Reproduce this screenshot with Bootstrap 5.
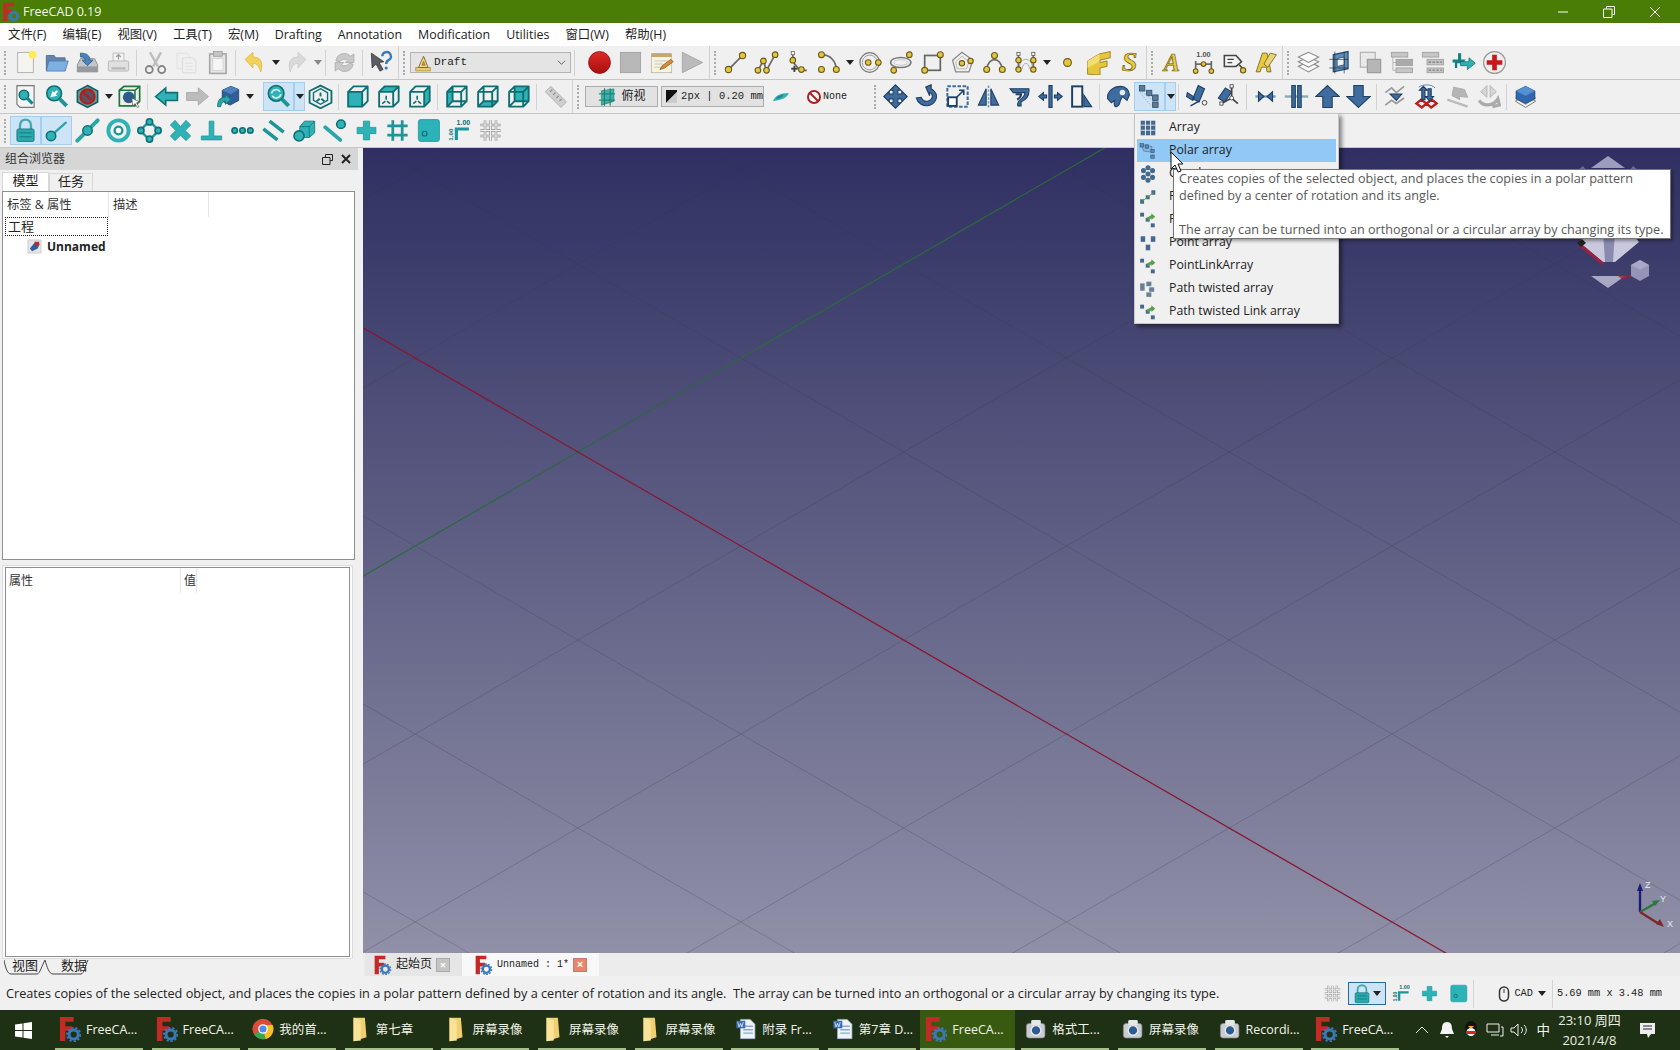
<!DOCTYPE html>
<html lang="zh">
<head>
<meta charset="UTF-8">
<title>FreeCAD 0.19</title>
<link href="https://cdn.jsdelivr.net/npm/bootstrap@5.3.0/dist/css/bootstrap.min.css" rel="stylesheet">
<script src="https://cdn.jsdelivr.net/npm/bootstrap@5.3.0/dist/js/bootstrap.bundle.min.js"></script>
<style>
html,body{width:1680px;height:1050px;overflow:hidden;margin:0}
body{font-family:"Open Sans","Noto Sans CJK SC",sans-serif;font-size:12px;line-height:1.2;color:#222;background:#f0f0f0;position:relative}
.mono{font-family:"Liberation Mono","Noto Sans CJK SC",monospace}
.titlebar{height:23px;background:#4a7d05;color:#f4f7ee;font-size:12.5px}
.titlebar svg.app{width:18px;height:20px;margin:0 3px 0 2px}
.winctl{margin-right:2px}
.winbtn{width:46px;display:flex;justify-content:center}
.menubar{height:23px;background:#fff;padding-left:0}
.menubar .nav-link{padding:0 8px;color:#222;font-size:12.4px;line-height:23px}
.tb-row{height:34px;background:#f0f0f0;border-bottom:1px solid #c6c6c6}
.tb-btn{width:31px;height:29px;display:flex;align-items:center;justify-content:center;flex:none}
.tb-btn svg{width:25px;height:25px}
.tb-arrow{width:11px;height:29px;display:flex;align-items:center;justify-content:center;flex:none}
.tb-arrow::before{content:"";border:4px solid transparent;border-top:5px solid #222;border-bottom:0}
.tb-arrow.dim::before{border-top-color:#888}
.tb-on{background:#cde4f7;box-shadow:inset 0 0 0 1px #a5cdf0}
.tb-grip{width:10px;height:26px;flex:none;position:relative}
.tb-grip::before{content:"";position:absolute;left:4px;top:1px;bottom:1px;border-left:2px dotted #aaa}
.tb-sep{width:6px;height:26px;flex:none;position:relative}
.tb-sep::before{content:"";position:absolute;left:2px;top:0;bottom:0;border-left:1px solid #d2d2d2}
.tb-end{height:33px;width:2px;border-right:1px solid #d0d0d0;flex:none}
.combo{width:161px;height:21px;margin:0 1px;background:#e4e4e4;border:1px solid #b4b4b4;font-size:11px;flex:none}
.combo svg{width:18px;height:18px;margin:0 2px 0 3px}
.combo svg.chev{width:9px;height:9px;margin:0 4px 0 auto}
.wbtn{height:21px;background:#e2e2e2;border:1px solid #adadad;flex:none;font-size:12px;white-space:nowrap}
.wbtn.mono{font-size:10.5px}
.w-view{width:73px;margin-left:2px}
.w-line{width:103px;margin-left:3px}
.w-none{width:106px}
.none-lbl{font-size:10px;margin-left:1px}
.leftpane{width:363px;flex:none;background:#f0f0f0}
.dockhead{height:22px;background:#d6d6d6;margin-right:5px;padding:1px 7px 0 5px;color:#333;font-size:12px}
.dtabs{height:21px;padding:2px 0 0 2px}
.dtab{height:19px;border:1px solid #d8d8d8;border-bottom:0;font-size:13px;line-height:15px;text-align:center;white-space:nowrap}
.dtab-on{background:#fff;width:47px}
.dtab-off{background:#f0f0f0;width:44px;margin-top:1px}
.treebox{height:369px;margin:0 8px 0 2px;background:#fff;border:1px solid #8f8f8f}
.treehead{height:25px;color:#333;font-size:12.3px}
.treehead div{height:25px;line-height:25px;padding-left:4px;border-right:1px solid #e6e6e6}
.treesel{width:103px;height:19px;margin-left:2px;border:1px dotted #222;font-size:13px;line-height:17px;padding-left:2px}
.treerow{padding-left:24px;height:22px;font-weight:700;font-size:12px}
.treerow svg{width:15px;height:15px;margin-right:5px}
.propwrap{height:395px;margin:5px 10px 0 2px;padding:1px 2px;background:#fbfbfb;border:1px solid #ddd}
.propbox{height:100%;background:#fff;border:1px solid #8f8f8f}
.prophead{height:25px;color:#333}
.prophead div{line-height:25px;padding-left:3px;height:25px;border-right:1px solid #e6e6e6}
.ptabs{height:17px;font-size:13px;padding-left:4px}
.ptabs svg{height:16px;width:96px}
.ptabs span{top:-1px}
.viewcol{width:1317px;flex:none}
.viewport{height:805px;background:linear-gradient(#2f2f62,#9090a8);overflow:hidden}
.viewport>svg{position:absolute}
.nav-cube{left:1180px;top:0}
.axes-pic{left:1232px;top:732px}
.doctabs{height:23px;background:#ececec;padding-left:2px}
.dc{height:23px;font-size:12px;flex:none}
.dc svg.fc{width:19px;height:20px}
.dc-a{width:97px;background:#e6e6e6;padding-left:8px}
.dc-b{width:137px;background:#f8f8f8;padding-left:12px;font-size:10px}
.xbox{width:14px;height:14px;background:#c4c4c4;border:1px solid #aaa;color:#fff;font-size:11px;line-height:12px;text-align:center;font-weight:700}
.xbox-o{background:#e8866a;border-color:#c77}
.statusbar{height:34px;background:#f0f0f0;font-size:12.7px;padding:1px 0 0 6px}
.statusright{margin-left:auto}
.statusright .tb-btn{width:28.5px;height:22px}
.statusright .tb-btn svg{width:19px;height:19px}
.lockbtn{width:38px;height:23px;background:#cde4f7;border:1px solid #2a6a9a;margin:0 1px}
.lockbtn svg{width:20px;height:20px}
.lockbtn .tb-arrow{width:9px}
.st-line{width:1px;height:28px;background:#d4d4d4;flex:none}
.st-line-a{margin-left:1px}
.st-mono{font-size:10.3px}
.st-size{margin:0 18px 0 4px}
.taskbar{height:40px;background:#1f3114;color:#f1f4ec;font-size:12.5px}
.startbtn{width:55px;flex:none}
.startbtn svg{margin-left:-8px}
.task{width:88px;height:40px;margin-right:8.6px;padding-left:4px;border-bottom:2px solid #a5c08a;flex:none;gap:5px;white-space:nowrap;overflow:hidden}
.task svg{width:22px;height:26px;flex:none}
.task-now{width:95px;margin-left:-4px;margin-right:6px;background:#375a10;padding-left:5px}
.trayarea{position:absolute;right:0;top:1010px;height:40px;color:#f1f4ec}
.tray-zh{font-size:13.5px;margin-left:9px}
.traytime{text-align:center;line-height:20px;font-size:13px;width:73px;color:#e9eee2;margin-left:3px}
.tray-note{margin:0 24px 0 13px}
.popmenu{position:absolute;left:1134px;top:113px;width:205px;height:211px;background:#f0f0f0;border:1px solid #c6c6c6;box-shadow:3px 3px 4px rgba(0,0,0,.45);padding:2px;z-index:5}
.popitem{height:23px;padding-left:2px;font-size:12.3px;color:#222}
.popitem svg{width:18px;height:18px;margin-right:12px;flex:none}
.popon{background:#90c8f6}
.tipbox{position:absolute;left:1173px;top:169px;width:498px;height:70px;background:#fff;border:1px solid #767676;box-shadow:2px 2px 3px rgba(0,0,0,.35);z-index:6;padding:0 5px;color:#575757;font-size:12.65px;line-height:17px;white-space:nowrap}
.cursorpic{position:absolute;left:1170px;top:151px;z-index:7;width:14px;height:22px}
.wl{fill:none;stroke:#6a6a6a;stroke-width:2.2}
.nd{fill:#e3c545;stroke:#6d5a12;stroke-width:1.4}
.tl{fill:#2fb2b5;stroke:#0e6f73;stroke-width:2}
.tw{fill:none;stroke:#0e6f73;stroke-width:2.4;stroke-linejoin:round}
.tf{fill:#2fb2b5}
.ts{fill:none;stroke:#2aa5a8;stroke-linecap:round}
.bl{fill:#3e6c9e;stroke:#1f3f63;stroke-width:1.4}
.gr{fill:#c6c6c6;stroke:#a2a2a2;stroke-width:1.2}
</style>
</head>
<body>
<svg width="0" height="0" class="position-absolute">
<defs>
<linearGradient id="redg" x1="0" y1="0" x2="0" y2="1"><stop offset="0" stop-color="#e02a2a"/><stop offset="1" stop-color="#a80e0e"/></linearGradient>
<symbol id="fc" viewBox="0 0 24 28"><path d="M1 1h15v5H7v5h7v5H7v11H1z" fill="#c22a25"/><circle cx="16" cy="20" r="5" fill="none" stroke="#3a78b8" stroke-width="3.2"/><circle cx="16" cy="20" r="7.3" fill="none" stroke="#3a78b8" stroke-width="2" stroke-dasharray="2.5 2"/></symbol>
<symbol id="new" viewBox="0 0 32 32"><rect x="6" y="3" width="20" height="26" fill="#f5f5ef" stroke="#a2a2a2"/><circle cx="25" cy="6" r="5" fill="#ffea5a"/></symbol>
<symbol id="open" viewBox="0 0 32 32"><path d="M3 7h10l2 3h12v16H3z" fill="#6285ab" stroke="#40638a"/><path d="M6 14h25l-4 13H3z" fill="#7db0e2" stroke="#4a76a5"/></symbol>
<symbol id="save" viewBox="0 0 32 32"><path d="M3 19l4-8h18l4 8v9H3z" fill="#c4c6c9" stroke="#808080"/><path d="M3 21h26v7H3z" fill="#96999e"/><path d="M7 4c8 0 12 3 12 9h4l-7 7-7-7h4c0-3-2-4-6-4z" fill="#4a84b8" stroke="#2a5a8a"/></symbol>
<symbol id="print" viewBox="0 0 32 32"><path d="M9 4h14v11H9z" fill="#f3f3f3" stroke="#b0b0b0"/><rect x="3" y="14" width="26" height="13" rx="2" fill="#e0e0e0" stroke="#acacac"/><rect x="7" y="22" width="18" height="3" fill="#b9b9b9"/><path d="M16 12V6m-3 3 3-3 3 3" stroke="#999" fill="none" stroke-width="1.5"/></symbol>
<symbol id="cut" viewBox="0 0 32 32"><path d="M9 3l10 18M23 3 13 21" stroke="#bdbdbd" stroke-width="3"/><circle cx="8" cy="25" r="4.5" fill="none" stroke="#858585" stroke-width="2.4"/><circle cx="24" cy="25" r="4.5" fill="none" stroke="#858585" stroke-width="2.4"/></symbol>
<symbol id="copy" viewBox="0 0 32 32"><path d="M4 4h13l3 3v17H4z" fill="#efefef" stroke="#dedede"/><path d="M11 10h13l4 4v15H11z" fill="#f0f0f0" stroke="#d6d6d6"/><path d="M14 17h10M14 21h10M14 25h10" stroke="#ddd"/></symbol>
<symbol id="paste" viewBox="0 0 32 32"><rect x="6" y="5" width="21" height="25" fill="#e6e6e6" stroke="#a5a5a5" stroke-width="2"/><rect x="11" y="2" width="11" height="6" fill="#c6c6c6" stroke="#999"/><rect x="10" y="11" width="13" height="15" fill="#f6f6f6" stroke="#cfcfcf"/></symbol>
<symbol id="undo" viewBox="0 0 32 32"><path d="M4 12 14 3v6c9 0 14 6 10 19-2-7-5-11-10-11v6z" fill="#f3d25c" stroke="#dcb437"/></symbol>
<symbol id="redo" viewBox="0 0 32 32"><path d="M28 12 18 3v6c-9 0-14 6-10 19 2-7 5-11 10-11v6z" fill="#dadada" stroke="#c8c8c8"/></symbol>
<symbol id="refresh" viewBox="0 0 32 32"><path d="M5 14A11 11 0 0 1 24 8l4-3v11H17l3-3a7 7 0 0 0-10 2zM27 18A11 11 0 0 1 8 24l-4 3V16h11l-3 3a7 7 0 0 0 10-2z" fill="#c9c9c9" stroke="#a8a8a8"/></symbol>
<symbol id="help" viewBox="0 0 32 32"><path d="M3 4l16 11-6 1 5 9-4 2-5-9-5 5z" fill="#5b5f63" stroke="#33363a"/><path d="M17 8a5.5 5.5 0 1 1 8 5c-2 1-3 2-3 5" stroke="#3a7ab5" stroke-width="3" fill="none"/><circle cx="22" cy="23" r="2" fill="#3a7ab5"/></symbol>
<symbol id="draft" viewBox="0 0 32 32"><path d="M3 24h26v6H3z" fill="#e9cc6b" stroke="#8b7321"/><path d="M8 24 17 4l8 20z" fill="#f1dc8a" stroke="#7a6420" stroke-width="1.6"/><path d="M14 20l3-7 3 7z" fill="#d84" stroke="#7a6420"/></symbol>
<symbol id="rec" viewBox="0 0 32 32"><circle cx="16" cy="16" r="14" fill="url(#redg)" stroke="#8a1010"/></symbol>
<symbol id="stop" viewBox="0 0 32 32"><rect x="3" y="3" width="26" height="26" fill="#b8b8b8" stroke="#9c9c9c"/></symbol>
<symbol id="note" viewBox="0 0 32 32"><rect x="3" y="6" width="26" height="23" fill="#f7f3df" stroke="#b5b5a5"/><rect x="3" y="4" width="26" height="5" fill="#c4a671"/><path d="M7 14h18M7 18h11M7 22h9" stroke="#bbb"/><path d="M14 25l3-5L28 12l3 3-11 8z" fill="#d88c3a" stroke="#8a5a20"/></symbol>
<symbol id="play" viewBox="0 0 32 32"><path d="M3 3l26 13L3 29z" fill="#bababa" stroke="#9f9f9f"/></symbol>
<symbol id="dline" viewBox="0 0 32 32"><path class="wl" d="M7 25 25 7"/><circle class="nd" cx="7" cy="25" r="4"/><circle class="nd" cx="25" cy="7" r="4"/></symbol>
<symbol id="dwire" viewBox="0 0 32 32"><path class="wl" d="M5 26 12 14l4 12 11-20"/><circle class="nd" cx="5" cy="26" r="3.6"/><circle class="nd" cx="12" cy="14" r="3.6"/><circle class="nd" cx="16" cy="26" r="3.6"/><circle class="nd" cx="27" cy="6" r="3.6"/></symbol>
<symbol id="dfil" viewBox="0 0 32 32"><path class="wl" d="M10 3v12l9 11h9"/><rect x="8" y="2" width="4" height="4" fill="#fff" stroke="#666"/><circle class="nd" cx="10" cy="13" r="3.6"/><circle class="nd" cx="21" cy="25" r="3.6"/><path d="M8 24h8M12 20v8" stroke="#444" stroke-width="2.4"/></symbol>
<symbol id="darc" viewBox="0 0 32 32"><path class="wl" d="M7 6c11 0 19 8 19 20"/><circle class="nd" cx="7" cy="6" r="3.8"/><circle class="nd" cx="7" cy="25" r="3.8"/><circle class="nd" cx="26" cy="25" r="3.8"/></symbol>
<symbol id="dcir" viewBox="0 0 32 32"><circle cx="15" cy="16" r="12.5" fill="none" stroke="#777" stroke-width="1.6"/><circle cx="15" cy="16" r="9.5" fill="none" stroke="#999" stroke-width="1.2"/><circle class="nd" cx="13" cy="16" r="3.6"/><circle class="nd" cx="26" cy="16" r="3.6"/></symbol>
<symbol id="dell" viewBox="0 0 32 32"><ellipse cx="15" cy="16" rx="13" ry="6.5" fill="none" stroke="#777" stroke-width="2"/><ellipse cx="15" cy="16" rx="9" ry="3.5" fill="none" stroke="#bbb"/><circle class="nd" cx="26" cy="6" r="3.6"/><circle class="nd" cx="6" cy="26" r="3.6"/></symbol>
<symbol id="drect" viewBox="0 0 32 32"><rect x="6" y="7" width="20" height="19" fill="none" stroke="#666" stroke-width="2.2"/><circle class="nd" cx="26" cy="6" r="3.8"/><circle class="nd" cx="6" cy="26" r="3.8"/></symbol>
<symbol id="dpoly" viewBox="0 0 32 32"><path d="M14 3 28 13 23 28H6L2 13z" fill="none" stroke="#888" stroke-width="1.6"/><path d="M14 8l9 7-3 9H8l-2-9z" fill="none" stroke="#aaa"/><circle class="nd" cx="14" cy="17" r="3.4"/><circle class="nd" cx="25" cy="14" r="3.4"/></symbol>
<symbol id="dspl" viewBox="0 0 32 32"><path class="wl" d="M6 25C8 8 24 8 26 25"/><circle class="nd" cx="16" cy="7" r="3.8"/><circle class="nd" cx="6" cy="25" r="3.8"/><circle class="nd" cx="26" cy="25" r="3.8"/></symbol>
<symbol id="dcub" viewBox="0 0 32 32"><path class="wl" d="M7 5v21M26 5v21"/><rect x="5" y="3" width="4" height="4" fill="#fff" stroke="#555"/><rect x="24" y="3" width="4" height="4" fill="#fff" stroke="#555"/><path d="M8 24C8 8 25 8 25 24M12 24c0-9 9-9 9 0" fill="none" stroke="#999"/><circle class="nd" cx="7" cy="25" r="3.4"/><circle class="nd" cx="26" cy="25" r="3.4"/><circle class="nd" cx="26" cy="13" r="3.4"/><circle class="nd" cx="7" cy="13" r="3.4"/></symbol>
<symbol id="dpt" viewBox="0 0 32 32"><circle class="nd" cx="16" cy="16" r="5"/></symbol>
<symbol id="dface" viewBox="0 0 32 32"><path d="M2 14 17 5 31 2v8l-13 3v3l9-2v7l-9 2v9L2 31z" fill="#e6c53c" stroke="#8d7414"/><path d="M2 14l15-9v10L2 23z" fill="#f2dd70"/></symbol>
<symbol id="dstr" viewBox="0 0 32 32"><text x="16" y="27" text-anchor="middle" font-family="Liberation Serif" font-style="italic" font-weight="700" font-size="36" fill="#e7ca3f" stroke="#6d5a12" stroke-width=".9">S</text></symbol>
<symbol id="dtxt" viewBox="0 0 32 32"><text x="15" y="27" text-anchor="middle" font-family="Liberation Serif" font-style="italic" font-weight="700" font-size="31" fill="#e7ca3f" stroke="#6d5a12" stroke-width=".9">A</text></symbol>
<symbol id="ddim" viewBox="0 0 32 32"><text x="16" y="9" text-anchor="middle" font-family="Liberation Sans" font-weight="700" font-size="9.5" fill="#555">1.00</text><path class="wl" d="M6 14v14M26 14v14M6 18h20"/><circle class="nd" cx="16" cy="18" r="3"/><circle class="nd" cx="6" cy="27" r="3"/><circle class="nd" cx="26" cy="27" r="3"/></symbol>
<symbol id="dlab" viewBox="0 0 32 32"><path d="M3 7h15l7 8-7 6H3z" fill="#f2f2f2" stroke="#444" stroke-width="2"/><path d="M7 12h8M7 16h6" stroke="#444" stroke-width="1.6"/><path d="M22 19l5 5" stroke="#444" stroke-width="2"/><circle class="nd" cx="27" cy="26" r="3.4"/></symbol>
<symbol id="dann" viewBox="0 0 32 32"><path d="M4 28 12 4h6l5 24h-5l-1-6h-6l-2 6z" fill="#e7ca3f" stroke="#6d5a12"/><path d="M22 4 14 18l5 4L30 6z" fill="#e7d477" stroke="#6d5a12"/></symbol>
<symbol id="glay" viewBox="0 0 32 32"><path d="M16 15 3 21l13 7 13-7z" fill="#fafafa" stroke="#8a8a8a" stroke-width="1.4"/><path d="M16 9 3 15l13 7 13-7z" fill="#fafafa" stroke="#8a8a8a" stroke-width="1.4"/><path d="M16 3 3 9l13 7 13-7z" fill="#fafafa" stroke="#8a8a8a" stroke-width="1.4"/></symbol>
<symbol id="gwp" viewBox="0 0 32 32"><path d="M8 6 27 2v22L8 28z" fill="#5f8dbb" stroke="#234a72" stroke-width="1.5"/><path d="M13 11l9-2v10l-9 2z" fill="#f0f0f0" stroke="#234a72"/><path d="M3 23h24M3 12h24M10 2v28M22 2v28" stroke="#222" stroke-width=".8"/></symbol>
<symbol id="gclone" viewBox="0 0 32 32"><rect x="3" y="3" width="19" height="19" fill="#e9e9e9" stroke="#b0b0b0" stroke-width="1.5"/><rect x="12" y="12" width="17" height="17" fill="#b6b6b6" stroke="#9a9a9a" stroke-width="1.5"/></symbol>
<symbol id="gtree" viewBox="0 0 32 32"><g class="gr"><rect x="3" y="3" width="21" height="6"/><rect x="9" y="12" width="21" height="8" fill="#aaa"/><rect x="9" y="23" width="21" height="6"/></g><path d="M5 9v17h4M5 16h4" stroke="#aaa" fill="none"/></symbol>
<symbol id="gtree2" viewBox="0 0 32 32"><g class="gr"><rect x="3" y="3" width="21" height="6"/><rect x="9" y="12" width="21" height="7"/><rect x="9" y="23" width="21" height="6"/></g><path d="M11 15.500h17M11 26h17" stroke="#8a8a8a" stroke-dasharray="3 2" stroke-width="2"/></symbol>
<symbol id="tarr" viewBox="0 0 32 32"><path d="M2 12h7V4h4v8h6l-4 5H8v6H5v-7H2z" fill="#157f83" /><path d="M12 15h11v-5l8 7-10 8v-5h-9z" class="tf" stroke="#0e6f73"/></symbol>
<symbol id="rplus" viewBox="0 0 32 32"><circle cx="16" cy="16" r="14" fill="#efefef" stroke="#999" stroke-width="1.5"/><path d="M13 6h6v7h7v6h-7v7h-6v-7H6v-6h7z" fill="#c41a1a"/></symbol>
<symbol id="fita" viewBox="0 0 32 32"><path d="M5 2h22v28H9l-4-4z" fill="#f4f4f4" stroke="#777" stroke-width="1.5"/><circle class="tl" cx="14" cy="14" r="6"/><path d="M18 18l7 7" stroke="#0e8a8e" stroke-width="4"/></symbol>
<symbol id="fits" viewBox="0 0 32 32"><circle cx="13" cy="12" r="9.500" fill="#2fb2b5" stroke="#0e6f73" stroke-width="2"/><path d="M20 19l9 9" stroke="#1d9599" stroke-width="5"/><path d="M8 17l3-8 2 2 3-3 2 2-3 3 2 2z" fill="#fff"/></symbol>
<symbol id="nohex" viewBox="0 0 32 32"><path d="M16 2 29 9v14L16 30 3 23V9z" fill="#6a9a9a" stroke="#0e5f63" stroke-width="2"/><circle cx="16" cy="16" r="9" fill="#556" stroke="#b02020" stroke-width="3"/><path d="M10 10l12 12" stroke="#b02020" stroke-width="3"/></symbol>
<symbol id="csel" viewBox="0 0 32 32"><path d="M3 8 9 3h20v19l-6 6H3z" fill="none" stroke="#1d7a3a" stroke-width="2.2"/><path d="M3 8h20v20M23 8l6-5" fill="none" stroke="#1d7a3a" stroke-width="2"/><circle cx="15" cy="17" r="7.500" fill="#2f5c8a"/><path d="M19 18l10 5-4 1 3 5-2 1-3-5-3 3z" fill="#fff" stroke="#444" stroke-width=".8"/></symbol>
<symbol id="tback" viewBox="0 0 32 32"><path d="M2 16 15 5v6h15v10H15v6z" class="tl"/></symbol>
<symbol id="gfwd" viewBox="0 0 32 32"><path d="M30 16 17 5v6H2v10h15v6z" fill="#bcbcbc" stroke="#a0a0a0"/></symbol>
<symbol id="bcube" viewBox="0 0 32 32"><path d="M8 8 19 3l10 4v14l-11 6-10-5z" fill="#2f5f9a" stroke="#173a63"/><path d="M8 8l11 5 10-6-10-4z" fill="#4d80bd"/><path d="M2 29c0-9 4-12 10-12v-4l7 7-7 6v-4c-3 0-5 2-6 7z" fill="#2aa5a8" stroke="#0e6f73"/></symbol>
<symbol id="zsync" viewBox="0 0 32 32"><circle cx="13" cy="12" r="10" fill="#2fb2b5" stroke="#0e6f73" stroke-width="2"/><path d="M20 19l9 9" stroke="#1d9599" stroke-width="5"/><path d="M7 12a6 6 0 0 1 11-2M19 13a6 6 0 0 1-11 2" stroke="#d8f2f2" stroke-width="2" fill="none"/></symbol>
<symbol id="ciso" viewBox="0 0 32 32"><path class="tw" d="M16 2 30 9v15l-14 7L2 24V9z" stroke-width="3"/><path d="M16 6 25 11v10l-9 5-9-5V11z" fill="none" stroke="#0e6f73" stroke-width="1.800"/><path d="M16 11v5M11 22l4-3M21 22l-4-3" stroke="#0e6f73" stroke-width="2.400"/></symbol>
<symbol id="cv1" viewBox="0 0 32 32"><path class="tf" d="M4 10h18v19H4z"/><path class="tw" d="M4 10l7-7h18v19l-7 7H4zM4 10h18v19M22 10l7-7"/></symbol>
<symbol id="cv2" viewBox="0 0 32 32"><path class="tf" d="M4 10l7-7h18l-7 7z"/><path class="tw" d="M4 10l7-7h18v19l-7 7H4zM4 10h18v19M22 10l7-7"/><path d="M13 15v5M8 25l4-3M18 25l-4-3" stroke="#0e6f73" stroke-width="2"/></symbol>
<symbol id="cv3" viewBox="0 0 32 32"><path class="tf" d="M22 10l7-7v19l-7 7z"/><path class="tw" d="M4 10l7-7h18v19l-7 7H4zM4 10h18v19M22 10l7-7"/><path d="M13 15v5M8 25l4-3M18 25l-4-3" stroke="#0e6f73" stroke-width="2"/></symbol>
<symbol id="cv4" viewBox="0 0 32 32"><path class="tf" d="M4 10l7-7v19l-7 7z"/><path class="tw" d="M4 10l7-7h18v19l-7 7H4zM4 10h18v19M22 10l7-7M11 3v19h18M11 22l-7 7"/></symbol>
<symbol id="cv5" viewBox="0 0 32 32"><path class="tf" d="M4 29l7-7h18l-7 7z"/><path class="tw" d="M4 10l7-7h18v19l-7 7H4zM4 10h18v19M22 10l7-7M11 3v19h18M11 22l-7 7"/></symbol>
<symbol id="cv6" viewBox="0 0 32 32"><path class="tf" d="M11 3h18v19H11z"/><path class="tw" d="M4 10l7-7h18v19l-7 7H4zM4 10h18v19M22 10l7-7M11 3v19h18M11 22l-7 7"/></symbol>
<symbol id="ruler" viewBox="0 0 32 32"><path d="M3 10 10 3l20 20-7 7z" fill="#cfcfcf" stroke="#a5a5a5"/><path d="M9 10l3-3M13 14l3-3M17 18l3-3M21 22l3-3" stroke="#8e8e8e" stroke-width="1.5"/></symbol>
<symbol id="plane" viewBox="0 0 32 32"><path d="M7 6l20-3v20L7 29z" fill="#3cb0a6" stroke="#1d7a70"/><path d="M3 11h26M3 21h26M12 2v28M21 2v28" stroke="#1d7a70" stroke-width="1.6"/></symbol>
<symbol id="blade" viewBox="0 0 32 32"><path d="M2 24C4 15 14 9 30 9c-2 6-8 10-16 12-5 1-9 2-12 3z" fill="#2fb2b5"/><path d="M10 15l-3 5 10-3 4-6z" fill="#0e6f73" opacity=".6"/></symbol>
<symbol id="nosign" viewBox="0 0 32 32"><circle cx="16" cy="16" r="12" fill="#fff" stroke="#a82222" stroke-width="4"/><path d="M8 8l16 16" stroke="#a82222" stroke-width="4"/></symbol>
<symbol id="mmove" viewBox="0 0 32 32"><path class="bl" d="M16 1l7 7h-4v5h5V9l7 7-7 7v-4h-5v5h4l-7 7-7-7h4v-5H8v4l-7-7 7-7v4h5V8H9z"/></symbol>
<symbol id="mrot" viewBox="0 0 32 32"><path d="M15 4 22 1v5c6 3 8 9 6 14-3 7-12 10-19 6-3-2-5-4-6-8l6-1c1 2 2 3 3 4 4 2 9 1 11-3 1-3 0-6-3-7v4z" class="bl"/></symbol>
<symbol id="mscale" viewBox="0 0 32 32"><path d="M3 3h26v26H3z" fill="none" stroke="#3e6c9e" stroke-width="2.600" stroke-dasharray="4.500 2"/><rect x="4" y="17" width="11" height="11" fill="#fff" stroke="#1f3f63" stroke-width="2.400"/><path d="M15 17 24 8m-6 0h6v6" stroke="#1f3f63" stroke-width="2" fill="none"/></symbol>
<symbol id="mmir" viewBox="0 0 32 32"><path class="bl" d="M13 6v21H3zM19 6v21h10z"/><path d="M16 2v28" stroke="#6a9ad0" stroke-width="2" stroke-dasharray="3 2"/></symbol>
<symbol id="moff" viewBox="0 0 32 32"><path d="M4 6h24c1 8-3 14-10 17v5h-4c-1-3 0-6 3-8 4-3 6-6 6-9H8z" class="bl"/><path d="M11 13h7c0 3-2 5-5 7" stroke="#1f3f63" stroke-width="2.600" fill="none"/></symbol>
<symbol id="mtrim" viewBox="0 0 32 32"><rect x="14" y="2" width="4" height="28" class="bl"/><path class="bl" d="M1 16l6-5v3h4v4H7v3zM31 16l-6-5v3h-4v4h4v3z"/></symbol>
<symbol id="mstr" viewBox="0 0 32 32"><rect x="4" y="3" width="13" height="26" fill="#f4f4f4" stroke="#1f3f63" stroke-width="2.500"/><path class="bl" d="M19 14v15h10z"/></symbol>
<symbol id="mclone" viewBox="0 0 32 32"><path d="M2 19C1 9 10 3 19 3c6 0 11 5 11 11l-3 7-6-5-3 6c0 3-2 7-5 7s-3-5-2-8l-4 3z" class="bl"/><circle cx="21" cy="11" r="3.500" fill="#e8eef5"/></symbol>
<symbol id="marr" viewBox="0 0 32 32"><g fill="#5b7a9a" stroke="#2b4a6a"><rect x="3" y="2" width="7" height="7"/><rect x="12" y="8" width="7" height="7"/><rect x="20" y="14" width="7" height="7"/><rect x="20" y="23" width="7" height="7"/></g><path d="M4 11l14 17M6 10l12 9" stroke="#9ab" stroke-dasharray="2 1.500"/></symbol>
<symbol id="mpoly" viewBox="0 0 32 32"><path d="M5 5 23 8l-1 10-14-2z" fill="#8ab4da" stroke="#3a6a9a"/><g fill="#5f88ad" stroke="#2b4a6a"><rect x="2" y="3" width="6" height="6"/><rect x="11" y="5" width="6" height="6"/><rect x="21" y="13" width="6" height="6"/><rect x="21" y="23" width="6" height="6"/></g></symbol>
<symbol id="mgrid" viewBox="0 0 32 32"><g fill="#43698f"><rect x="3" y="3" width="7.500" height="26"/><rect x="12.300" y="3" width="7.500" height="26"/><rect x="21.500" y="3" width="7.500" height="26"/></g><path d="M3 11h26M3 20h26" stroke="#f0f0f0" stroke-width="1.500"/></symbol>
<symbol id="mcirc" viewBox="0 0 32 32"><g fill="#43698f"><circle cx="16" cy="5" r="4.500"/><circle cx="8" cy="10" r="4.500"/><circle cx="24" cy="10" r="4.500"/><circle cx="16" cy="16" r="4.500"/><circle cx="8" cy="22" r="4.500"/><circle cx="24" cy="22" r="4.500"/><circle cx="16" cy="27" r="4.500"/></g></symbol>
<symbol id="mpath" viewBox="0 0 32 32"><g fill="#43698f"><rect x="2" y="20" width="7" height="8"/><rect x="12" y="13" width="7" height="7"/><rect x="22" y="4" width="7" height="8"/></g><path d="M5 24 26 8" stroke="#5aa04a" stroke-width="1.600"/></symbol>
<symbol id="mlink" viewBox="0 0 32 32"><g fill="#43698f"><rect x="2" y="3" width="7" height="7"/><rect x="12" y="12" width="7" height="7"/><rect x="21" y="22" width="7" height="7"/></g><path d="M14 12l8-5v-3l7 6-7 6v-3l-6 4z" fill="#5aa04a"/></symbol>
<symbol id="mpoint" viewBox="0 0 32 32"><g fill="#43698f"><rect x="3" y="4" width="8" height="10"/><rect x="21" y="4" width="8" height="10"/><rect x="12" y="19" width="8" height="10"/></g></symbol>
<symbol id="mtw" viewBox="0 0 32 32"><g fill="#6a7f95"><rect x="2" y="6" width="8" height="13"/><rect x="13" y="3" width="9" height="8"/><rect x="18" y="13" width="9" height="8"/><rect x="13" y="22" width="9" height="8"/></g></symbol>
<symbol id="mwire" viewBox="0 0 32 32"><path class="bl" d="M17 2l8 4-7 17-8-4zM3 11l9 6-2 4-8-5z"/><path d="M18 22 7 28" stroke="#1f3f63" stroke-width="2"/><circle cx="25" cy="24" r="3" fill="none" stroke="#222"/></symbol>
<symbol id="mshape" viewBox="0 0 32 32"><path class="bl" d="M3 18l9-13 8 5-9 13z"/><path d="M20 3v15l-13 7M20 18l8 7" stroke="#444" stroke-width="2.200" fill="none"/><rect x="18" y="1" width="4" height="4" fill="#fff" stroke="#333"/><rect x="5" y="23" width="4" height="4" fill="#fff" stroke="#333"/><circle cx="20" cy="18" r="2.500" fill="#fff" stroke="#333"/></symbol>
<symbol id="mjoin" viewBox="0 0 32 32"><path d="M3 16h26" stroke="#7a9ac0" stroke-width="3"/><path class="bl" d="M14 16 7 10v12zM18 16l7-6v12z"/></symbol>
<symbol id="msplit" viewBox="0 0 32 32"><path d="M1 16h30" stroke="#8aa" stroke-width="3"/><rect x="10" y="2" width="4.500" height="28" class="bl"/><rect x="17.500" y="2" width="4.500" height="28" class="bl"/></symbol>
<symbol id="mup" viewBox="0 0 32 32"><path class="bl" d="M16 2 31 16h-9v14H10V16H1z"/></symbol>
<symbol id="mdn" viewBox="0 0 32 32"><path class="bl" d="M16 30 31 16h-9V2H10v14H1z"/></symbol>
<symbol id="mwave" viewBox="0 0 32 32"><path d="M3 11 11 5l6 6 10-8M3 27l8-6 6 4 10-7" stroke="#999" stroke-width="2.200" fill="none"/><path class="bl" d="M9 13h15l-7 8z"/></symbol>
<symbol id="mred" viewBox="0 0 32 32"><path d="M3 25l6-5 7 5-6 5zM16 25l7-5 6 5-7 5z" fill="none" stroke="#b82020" stroke-width="3"/><path class="bl" d="M7 8l5-5 5 5h-3v12h-4V8zM18 6h4v10h3l-5 6-5-6h3z"/><path d="M6 4c6-4 16-4 21 1" stroke="#3e6c9e" fill="none"/></symbol>
<symbol id="gdr1" viewBox="0 0 32 32"><path d="M11 4 25 7l4 10-11-1 1 4-10-5z" fill="#b5b5b5" stroke="#a5a5a5"/><path d="M3 20l26 9" stroke="#bbb" stroke-width="3"/></symbol>
<symbol id="gdr2" viewBox="0 0 32 32"><path d="M14 2 6 10l8 7zM18 2l8 8-8 7z" fill="#d6d6d6" stroke="#aaa"/><path d="M4 21c5 8 18 8 24-2l2 8-9 2" fill="none" stroke="#aaa" stroke-width="4"/></symbol>
<symbol id="mwp" viewBox="0 0 32 32"><path d="M3 22l13-7 13 7-13 8z" fill="none" stroke="#777" stroke-width="1.200"/><path d="M3 18l13-7 13 7-13 8z" fill="none" stroke="#888" stroke-width="1.200"/><path d="M4 9 16 3l12 6v10l-12 6L4 19z" fill="#2f68ad" stroke="#1d4370"/><path d="M4 9l12 6 12-6-12-6z" fill="#5590d5"/></symbol>
<symbol id="slock" viewBox="0 0 32 32"><path d="M9 15V9a7 7 0 0 1 14 0v6" fill="none" stroke="#46a9ad" stroke-width="3"/><rect x="5" y="14" width="22" height="16" rx="2" fill="#2aa9ac" stroke="#0e6f73"/><path d="M8 19h16M8 24h16" stroke="#0e6f73"/></symbol>
<symbol id="send" viewBox="0 0 32 32"><path class="ts" d="M11 21 28 6" stroke-width="3"/><circle cx="9" cy="23" r="6" class="tl"/></symbol>
<symbol id="smid" viewBox="0 0 32 32"><path class="ts" d="M3 29 29 3" stroke-width="5"/><circle cx="16" cy="16" r="6" class="tl"/></symbol>
<symbol id="scen" viewBox="0 0 32 32"><circle cx="16" cy="16" r="13" fill="none" stroke="#2fb2b5" stroke-width="5"/><circle cx="16" cy="16" r="5" fill="#fff" stroke="#1d9599" stroke-width="3"/></symbol>
<symbol id="sang" viewBox="0 0 32 32"><path d="M16 4 28 16 16 28 4 16z" fill="none" stroke="#1d9599" stroke-width="3"/><circle class="tl" cx="16" cy="5" r="4"/><circle class="tl" cx="27" cy="16" r="4"/><circle class="tl" cx="16" cy="27" r="4"/><circle class="tl" cx="5" cy="16" r="4"/></symbol>
<symbol id="sx" viewBox="0 0 32 32"><path d="M9 3l7 8 7-8 6 6-7 7 7 7-6 6-7-7-7 7-6-6 7-7-7-7z" class="tf" stroke="#1d9599"/></symbol>
<symbol id="sperp" viewBox="0 0 32 32"><path d="M13 4h6v19h10v5H3v-5h10z" class="tf" stroke="#1d9599"/></symbol>
<symbol id="sdots" viewBox="0 0 32 32"><circle cx="6" cy="16" r="3.500" class="tl" stroke-width="1"/><circle cx="16" cy="16" r="3.500" class="tl" stroke-width="1"/><circle cx="26" cy="16" r="3.500" class="tl" stroke-width="1"/></symbol>
<symbol id="spar" viewBox="0 0 32 32"><path d="M11 4 29 18M3 14 21 28" stroke="#1d9599" stroke-width="4.500"/></symbol>
<symbol id="sbox" viewBox="0 0 32 32"><path d="M10 11 16 4h13v15l-7 6H10z" class="tf" stroke="#0e6f73"/><path d="M10 11h12v14M22 11l7-7" stroke="#0e6f73" fill="none"/><circle class="tl" cx="9" cy="23" r="6.500"/></symbol>
<symbol id="snear" viewBox="0 0 32 32"><path class="ts" d="M3 12 22 28" stroke-width="5"/><circle class="tl" cx="23" cy="8" r="5.500"/></symbol>
<symbol id="splus" viewBox="0 0 32 32"><path d="M12 4h8v8h8v8h-8v8h-8v-8H4v-8h8z" class="tf" stroke="#1d9599"/></symbol>
<symbol id="sgrid" viewBox="0 0 32 32"><path d="M10 3v26M22 3v26M3 10h26M3 22h26" stroke="#1d9599" stroke-width="3.500"/></symbol>
<symbol id="splane" viewBox="0 0 32 32"><rect x="3" y="2" width="27" height="28" rx="3" fill="#2bb3b8" stroke="#1d9599"/><circle cx="11" cy="20" r="3" fill="none" stroke="#0e6f73" stroke-width="1.500"/></symbol>
<symbol id="sdim" viewBox="0 0 32 32"><text x="21" y="9" text-anchor="middle" font-family="Liberation Sans" font-weight="700" font-size="9" fill="#0e6f73">1.00</text><text x="8" y="29" font-family="Liberation Sans" font-weight="700" font-size="8" fill="#0e6f73" transform="rotate(-90 8 29)">1.00</text><path d="M12 28V14h16" stroke="#1d9599" stroke-width="4" fill="none"/></symbol>
<symbol id="smesh" viewBox="0 0 32 32"><path d="M9 3v26M16 3v26M23 3v26M3 9h26M3 16h26M3 23h26" stroke="#8e8e8e" stroke-width="3.200"/><path d="M9 3v26M16 3v26M23 3v26M3 9h26M3 16h26M3 23h26" stroke="#f0f0f0" stroke-width="1.500"/></symbol>
<symbol id="partdoc" viewBox="0 0 32 32"><rect x="2" y="2" width="28" height="28" fill="#e4e4ea" stroke="#aaa"/><path d="M6 20l12-14 9 4-4 10-12 6z" fill="#2f5f9a"/><path d="M16 6h10v8h-8z" fill="#c22a25"/></symbol>
<symbol id="folder" viewBox="0 0 24 32"><path d="M4 2h14l2 24-16 5z" fill="#f0cf6c"/><path d="M4 2l9 3v25l-9 1z" fill="#f9e39a"/></symbol>
<symbol id="word" viewBox="0 0 32 32"><path d="M8 2h14l7 7v21H8z" fill="#eef3fa" stroke="#9cb4d2"/><path d="M12 12h14M12 17h14M12 22h14" stroke="#8ba9d0" stroke-width="2"/><rect x="2" y="4" width="13" height="11" fill="#3d6fb5"/><path d="M4 6l2 7 2-5 2 5 2-7" stroke="#fff" fill="none"/></symbol>
<symbol id="cam" viewBox="0 0 32 32"><rect x="2" y="8" width="27" height="21" rx="4" fill="#c9cdd3" stroke="#888"/><rect x="9" y="3" width="14" height="8" rx="2" fill="#e5e7ea"/><circle cx="16" cy="18" r="7" fill="#2b5b90" stroke="#e9e9e9" stroke-width="2"/></symbol>
<symbol id="chrome" viewBox="0 0 32 32"><circle cx="16" cy="16" r="15" fill="#e04a3a"/><path d="M16 16 3 23.500A15 15 0 0 1 4 7z" fill="#e04a3a"/><path d="M16 16 3 23.500A15 15 0 0 0 20 30.400z" fill="#36a853"/><path d="M16 16l4 14.400A15 15 0 0 0 30 10H16z" fill="#f6c021"/><circle cx="16" cy="16" r="7" fill="#fff"/><circle cx="16" cy="16" r="5.200" fill="#4d8bf0"/></symbol>
</defs>
</svg>

<div class="titlebar d-flex align-items-center">
  <svg class="app"><use href="#fc"/></svg>
  <span>FreeCAD 0.19</span>
  <div class="winctl ms-auto d-flex">
    <div class="winbtn"><svg width="12" height="12"><path d="M1 6h10" stroke="#fff"/></svg></div>
    <div class="winbtn"><svg width="12" height="12"><path d="M3.500 2.500V.5h8v8h-2M.5 3h8.500v8.500H.5z" stroke="#fff" fill="none"/></svg></div>
    <div class="winbtn"><svg width="12" height="12"><path d="M1 1l10 10M11 1 1 11" stroke="#fff"/></svg></div>
  </div>
</div>

<nav class="menubar navbar navbar-expand py-0">
  <ul class="navbar-nav">
    <li class="nav-item"><a class="nav-link" href="#">文件(F)</a></li>
    <li class="nav-item"><a class="nav-link" href="#">编辑(E)</a></li>
    <li class="nav-item"><a class="nav-link" href="#">视图(V)</a></li>
    <li class="nav-item"><a class="nav-link" href="#">工具(T)</a></li>
    <li class="nav-item"><a class="nav-link" href="#">宏(M)</a></li>
    <li class="nav-item"><a class="nav-link" href="#">Drafting</a></li>
    <li class="nav-item"><a class="nav-link" href="#">Annotation</a></li>
    <li class="nav-item"><a class="nav-link" href="#">Modification</a></li>
    <li class="nav-item"><a class="nav-link" href="#">Utilities</a></li>
    <li class="nav-item"><a class="nav-link" href="#">窗口(W)</a></li>
    <li class="nav-item"><a class="nav-link" href="#">帮助(H)</a></li>
  </ul>
</nav>

<div class="tb-row d-flex align-items-center">
  <div class="d-flex align-items-center" data-tb=": new open save print | cut copy paste | undo v redo v~ | refresh | help ]"></div>
  <div class="tb-grip"></div>
  <div class="combo mono d-flex align-items-center">
    <svg><use href="#draft"/></svg><span>Draft</span>
    <svg class="chev" viewBox="0 0 10 10"><path d="M1 3l4 4 4-4" stroke="#555" fill="none"/></svg>
  </div>
  <div class="d-flex align-items-center" data-tb="| _6 rec stop note play ] : dline dwire dfil darc v dcir dell drect dpoly dspl dcub v dpt dface dstr ] : dtxt ddim dlab dann ] : glay gwp gclone gtree gtree2 tarr rplus"></div>
</div>

<div class="tb-row d-flex align-items-center">
  <div class="d-flex align-items-center" data-tb=": fita fits nohex v csel | tback gfwd bcube v _8 zsync! v! ciso | cv1 cv2 cv3 | cv4 cv5 cv6 | ruler ] :"></div>
  <div class="wbtn w-view d-flex align-items-center justify-content-center gap-1"><svg width="20" height="20"><use href="#plane"/></svg><span>俯视</span></div>
  <div class="wbtn w-line mono d-flex align-items-center ps-1">
    <svg width="13" height="13" class="me-1"><path d="M0 0h13L0 13z" fill="#111"/><path d="M13 0v13H0z" fill="#ccc"/></svg><span>2px | 0.20 mm</span>
  </div>
  <div class="w-none d-flex align-items-center">
    <svg width="18" height="18" class="ms-2"><use href="#blade"/></svg>
    <svg width="16" height="16" class="ms-3"><use href="#nosign"/></svg><span class="none-lbl mono">None</span>
  </div>
  <div class="d-flex align-items-center" data-tb=": mmove mrot mscale mmir moff mtrim mstr | mclone marr! v! | mwire mshape | mjoin msplit mup mdn | mwave mred gdr1 gdr2 | mwp"></div>
</div>

<div class="tb-row d-flex align-items-center">
  <div class="d-flex align-items-center" data-tb=": slock! send! smid scen sang sx sperp sdots spar sbox snear splus sgrid splane sdim smesh"></div>
</div>

<div class="d-flex" style="height:828px">
  <aside class="leftpane d-flex flex-column">
    <div class="dockhead d-flex align-items-center justify-content-between">
      <span>组合浏览器</span>
      <span class="d-flex align-items-center gap-2">
        <svg width="11" height="11"><path d="M3.500 3V.5h7v6H8M.5 3.500h7.500v7H.5z" stroke="#222" fill="none"/></svg>
        <svg width="10" height="10"><path d="M1 1l8 8M9 1 1 9" stroke="#222" stroke-width="2"/></svg>
      </span>
    </div>
    <div class="dtabs d-flex">
      <div class="dtab dtab-on">模型</div>
      <div class="dtab dtab-off">任务</div>
    </div>
    <div class="treebox">
      <div class="treehead d-flex"><div style="width:106px">标签 &amp; 属性</div><div style="width:100px">描述</div></div>
      <div class="treesel">工程</div>
      <div class="treerow d-flex align-items-center"><svg><use href="#partdoc"/></svg><span>Unnamed</span></div>
    </div>
    <div class="propwrap">
      <div class="propbox">
        <div class="prophead d-flex"><div style="width:175px">属性</div><div>值</div></div>
      </div>
    </div>
    <div class="ptabs d-flex align-items-center position-relative">
      <svg viewBox="0 0 96 16"><path d="M0 0c1 6 3 14 7 14h26c3 0 5-9 8-14 2 7 4 14 8 14h28c3 0 4-8 7-14" fill="none" stroke="#444"/></svg>
      <span class="position-absolute" style="left:12px">视图</span>
      <span class="position-absolute" style="left:61px">数据</span>
    </div>
  </aside>

  <div class="viewcol d-flex flex-column">
    <div class="viewport position-relative">
      <svg id="gridlines" width="1317" height="805"></svg>
      <svg class="nav-cube" width="130" height="160" viewBox="0 0 130 160">
        <path d="M65 8 48 20h34z" fill="#9d9dbe"/><path d="M40 18 28 28l18-2zM90 18l12 10-18-2z" fill="#6a6a95"/>
        <path d="M36 94 60 114h12l24-20-12-14H48z" fill="#c9c9de"/>
        <path d="M60 82h12l-2 32h-8z" fill="#8a8ab0"/>
        <path d="M36 96 60 116" stroke="#9e2040" stroke-width="3"/>
        <path d="M34 95l5-4 4 4-5 4z" fill="#222"/>
        <path d="M48 128h34L65 140z" fill="#a9a9c6"/>
        <path d="M90 128l-10 4-5-4z" fill="#9e2040" opacity=".8"/>
        <path d="M88 117l9-5 9 5v11l-9 5-9-5z" fill="#9494b6"/>
        <path d="M88 117l9 5 9-5-9-5z" fill="#a8a8c6"/>
      </svg>
      <svg class="axes-pic" width="80" height="60" viewBox="0 0 80 60">
        <path d="M45 32V8" stroke="#1b1b7a" stroke-width="2.400"/><path d="M45 3l3 8h-6z" fill="#1b1b7a"/>
        <path d="M45 32 61 23" stroke="#2a7a3a" stroke-width="2.400"/><path d="M65 20l-8 1 3 5z" fill="#2a7a3a"/>
        <path d="M45 32 64 44" stroke="#7a2a2a" stroke-width="2.400"/><path d="M69 47l-4-8-4 5z" fill="#7a2a2a"/>
        <g font-family="Liberation Sans" font-size="9" fill="#e8e8ee"><text x="50" y="8">Z</text><text x="65" y="22">Y</text><text x="72" y="47">X</text></g>
      </svg>
    </div>
    <div class="doctabs d-flex">
      <div class="dc dc-a d-flex align-items-center"><svg class="fc"><use href="#fc"/></svg><span class="ms-1">起始页</span><span class="xbox ms-1">×</span></div>
      <div class="dc dc-b mono d-flex align-items-center"><svg class="fc"><use href="#fc"/></svg><span class="ms-1">Unnamed : 1*</span><span class="xbox xbox-o ms-1">×</span></div>
    </div>
  </div>
</div>

<div class="statusbar d-flex align-items-center">
  <span>Creates copies of the selected object, and places the copies in a polar pattern defined by a center of rotation and its angle.&nbsp; The array can be turned into an orthogonal or a circular array by changing its type.</span>
  <div class="statusright d-flex align-items-center">
    <div class="tb-btn"><svg><use href="#smesh"/></svg></div>
    <div class="lockbtn d-flex align-items-center justify-content-center"><svg><use href="#slock"/></svg><span class="tb-arrow"></span></div>
    <div class="tb-btn"><svg><use href="#sdim"/></svg></div>
    <div class="tb-btn"><svg><use href="#splus"/></svg></div>
    <div class="tb-btn"><svg><use href="#splane"/></svg></div>
    <div class="st-line st-line-a"></div>
    <svg width="12" height="16" class="ms-4" viewBox="0 0 12 16"><rect x="1.500" y="1" width="9" height="14" rx="4.500" fill="none" stroke="#333" stroke-width="1.500"/><path d="M6 3v4" stroke="#333"/></svg>
    <span class="st-mono mono ms-1">CAD</span>
    <span class="tb-arrow ms-1"></span>
    <div class="st-line ms-1"></div>
    <span class="st-mono st-size mono">5.69 mm x 3.48 mm</span>
  </div>
</div>

<div class="taskbar d-flex">
  <div class="startbtn d-flex align-items-center justify-content-center">
    <svg width="17" height="17" viewBox="0 0 17 17"><path d="M0 2.500 7.500 1.400v6.600H0zM8.500 1.200 17 0v8H8.500zM0 9h7.500v6.600L0 14.500zM8.500 9H17v8l-8.500-1.200z" fill="#fff"/></svg>
  </div>
  <div class="task d-flex align-items-center"><svg><use href="#fc"/></svg><span>FreeCA...</span></div>
  <div class="task d-flex align-items-center"><svg><use href="#fc"/></svg><span>FreeCA...</span></div>
  <div class="task d-flex align-items-center"><svg><use href="#chrome"/></svg><span>我的首...</span></div>
  <div class="task d-flex align-items-center"><svg><use href="#folder"/></svg><span>第七章</span></div>
  <div class="task d-flex align-items-center"><svg><use href="#folder"/></svg><span>屏幕录像</span></div>
  <div class="task d-flex align-items-center"><svg><use href="#folder"/></svg><span>屏幕录像</span></div>
  <div class="task d-flex align-items-center"><svg><use href="#folder"/></svg><span>屏幕录像</span></div>
  <div class="task d-flex align-items-center"><svg><use href="#word"/></svg><span>附录 Fr...</span></div>
  <div class="task d-flex align-items-center"><svg><use href="#word"/></svg><span>第7章 D...</span></div>
  <div class="task task-now d-flex align-items-center"><svg><use href="#fc"/></svg><span>FreeCA...</span></div>
  <div class="task d-flex align-items-center"><svg><use href="#cam"/></svg><span>格式工...</span></div>
  <div class="task d-flex align-items-center"><svg><use href="#cam"/></svg><span>屏幕录像</span></div>
  <div class="task d-flex align-items-center"><svg><use href="#cam"/></svg><span>Recordi...</span></div>
  <div class="task d-flex align-items-center"><svg><use href="#fc"/></svg><span>FreeCA...</span></div>
</div>
<div class="trayarea d-flex align-items-center">
  <svg width="14" height="10" class="me-2"><path d="M1 8l6-6 6 6" stroke="#eee" fill="none"/></svg>
  <svg width="16" height="18" style="margin-left:2px"><path d="M8 1c4 0 5 3 5 7l2 5H1l2-5c0-4 1-7 5-7zM6 15h4l-2 2z" fill="#f4f4f4"/></svg>
  <svg width="18" height="20" style="margin-left:7px" viewBox="0 0 18 20"><ellipse cx="9" cy="8" rx="6" ry="7" fill="#111"/><ellipse cx="9" cy="12" rx="4.500" ry="4" fill="#fff"/><path d="M4 11h10l-1 3H5z" fill="#d22"/><path d="M6 6h6l-3 3z" fill="#f0b020"/></svg>
  <svg width="18" height="14" style="margin-left:6px"><path d="M1 1h12v8H1zM15 4h2v9h-3M5 12h8" stroke="#eee" fill="none"/></svg>
  <svg width="18" height="14" style="margin-left:6px"><path d="M1 5h3l4-4v12L4 9H1zM11 4c2 2 2 4 0 6M14 2c3 3 3 7 0 10" stroke="#eee" fill="none"/></svg>
  <span class="tray-zh">中</span>
  <div class="traytime">23:10 周四<br>2021/4/8</div>
  <svg class="tray-note" width="17" height="17"><path d="M1 1h15v11h-4l-3 4-1-4H1z" fill="#eee"/><path d="M4 4h9M4 7h9" stroke="#223"/></svg>
</div>

<div class="popmenu">
  <div class="popitem d-flex align-items-center"><svg><use href="#mgrid"/></svg>Array</div>
  <div class="popitem popon d-flex align-items-center"><svg><use href="#mpoly"/></svg>Polar array</div>
  <div class="popitem d-flex align-items-center"><svg><use href="#mcirc"/></svg>Circular array</div>
  <div class="popitem d-flex align-items-center"><svg><use href="#mpath"/></svg>Path array</div>
  <div class="popitem d-flex align-items-center"><svg><use href="#mlink"/></svg>Path Link array</div>
  <div class="popitem d-flex align-items-center"><svg><use href="#mpoint"/></svg>Point array</div>
  <div class="popitem d-flex align-items-center"><svg><use href="#mlink"/></svg>PointLinkArray</div>
  <div class="popitem d-flex align-items-center"><svg><use href="#mtw"/></svg>Path twisted array</div>
  <div class="popitem d-flex align-items-center"><svg><use href="#mlink"/></svg>Path twisted Link array</div>
</div>
<div class="tipbox">Creates copies of the selected object, and places the copies in a polar pattern<br>defined by a center of rotation and its angle.<br><br>The array can be turned into an orthogonal or a circular array by changing its type.</div>
<svg class="cursorpic" viewBox="0 0 14 22"><path d="M1 1v17l4-4 3 7 3-1-3-7h5z" fill="#fff" stroke="#111"/></svg>

<script>
  // toolbars: ":" grip, "|" separator, "]" end of a toolbar, "v" drop arrow, "_n" spacer, "!" checked
  document.querySelectorAll("[data-tb]").forEach(function (bar) {
    let html = "";
    bar.dataset.tb.split(" ").forEach(function (t) {
      let on = t.endsWith("!") ? " tb-on" : "";
      t = t.replace("!", "");
      if (t === ":") html += '<div class="tb-grip"></div>';
      else if (t === "|") html += '<div class="tb-sep"></div>';
      else if (t === "]") html += '<div class="tb-end"></div>';
      else if (t === "v") html += `<div class="tb-arrow${on}"></div>`;
      else if (t === "v~") html += '<div class="tb-arrow dim"></div>';
      else if (t[0] === "_") html += `<div style="width:${t.slice(1)}px"></div>`;
      else html += `<div class="tb-btn${on}"><svg><use href="#${t}"/></svg></div>`;
    });
    bar.innerHTML = html;
  });

  // isometric grid in the 3D view, the axes cross at 215,304
  let g = "", w = 1317, cx = 215, cy = 304, s = 0.5774;
  function ln(x1, y1, x2, y2, col, sw) {
    g += `<line x1="${x1}" y1="${y1}" x2="${x2}" y2="${y2}" stroke="${col}" stroke-width="${sw}"/>`;
  }
  for (let k = -8; k <= 8; k++) {
    if (k === 0) continue;
    let d = k * 188;
    ln(0, cy - cx * s + d, w, cy + (w - cx) * s + d, "rgba(55,55,80,.26)", 1);
    ln(0, cy + cx * s + d, w, cy - (w - cx) * s + d, "rgba(55,55,80,.26)", 1);
  }
  ln(0, cy + cx * s, w, cy - (w - cx) * s, "#2a6a3c", 1.2);
  ln(0, cy - cx * s, w, cy + (w - cx) * s, "#8a1530", 1.2);
  document.getElementById("gridlines").innerHTML = g;
</script>
</body>
</html>
